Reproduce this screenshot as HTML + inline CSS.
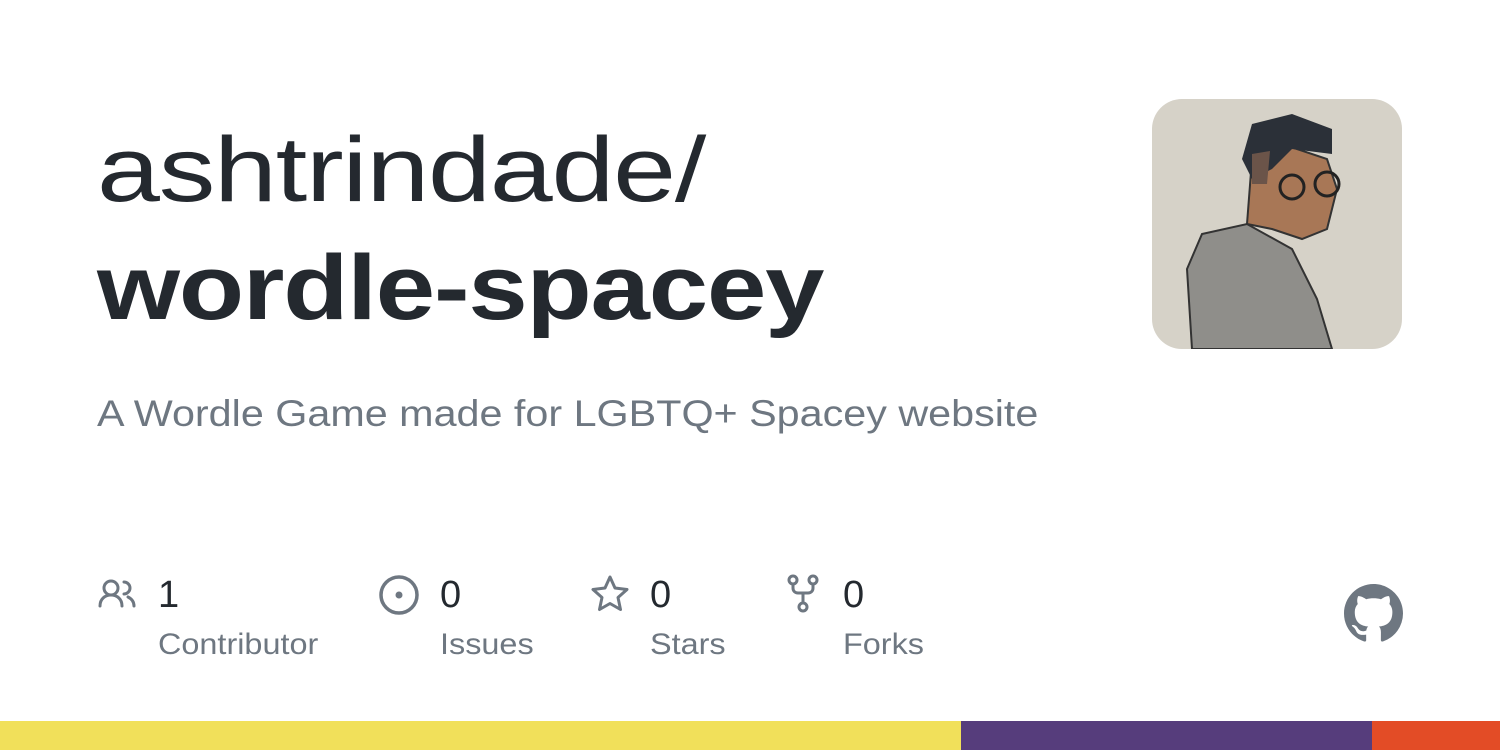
<!DOCTYPE html>
<html><head><style>
body{margin:0;width:1500px;height:750px;background:#fff;position:relative;overflow:hidden;font-family:"Liberation Sans",sans-serif;color:#24292f}
.t{position:absolute;left:97px;white-space:nowrap;transform-origin:left top}
.n{position:absolute;top:574px;font-size:38px;color:#24292f}
.l{position:absolute;top:628px;font-size:30px;color:#6e7781;transform:scaleX(1.08);transform-origin:left top}
svg.i{position:absolute}
</style></head><body>
<div class="t" style="top:118px;font-size:92px;letter-spacing:-1px;transform:scaleX(1.23)">ashtrindade/</div>
<div class="t" style="top:236px;font-size:92px;font-weight:bold;letter-spacing:-1px;transform:scaleX(1.16)">wordle-spacey</div>
<div class="t" style="top:393px;font-size:37px;color:#6e7781;transform:scaleX(1.116)">A Wordle Game made for LGBTQ+ Spacey website</div>

<svg width="250" height="250" style="position:absolute;left:1152px;top:99px" viewBox="0 0 250 250">
<defs><clipPath id="c"><rect width="250" height="250" rx="30"/></clipPath></defs>
<g clip-path="url(#c)">
<rect width="250" height="250" fill="#d6d2c8"/>
<path d="M40 250 L35 170 L50 135 L95 125 L140 150 L165 200 L180 250Z" fill="#8f8e8a" stroke="#333" stroke-width="2"/>
<path d="M95 125 L100 60 L130 45 L175 60 L185 90 L175 130 L150 140 L120 130Z" fill="#a87756" stroke="#333" stroke-width="2"/>
<path d="M90 60 L100 25 L140 15 L180 30 L180 55 L140 50 L120 70 L100 80Z" fill="#2b3038"/>
<path d="M100 55 L118 52 L115 85 L100 85Z" fill="#6b5449"/>
<circle cx="140" cy="88" r="12" fill="none" stroke="#222" stroke-width="3"/>
<circle cx="175" cy="85" r="12" fill="none" stroke="#222" stroke-width="3"/>
</g></svg>

<svg class="i" style="left:98px;top:578px" width="40" height="32" viewBox="0 0 40 32" fill="none" stroke="#6e7781" stroke-width="3" stroke-linecap="round"><circle cx="13" cy="10" r="7"/><path d="M2 28c0-7 5-11 11-11s11 4 11 11"/><path d="M26 4a6 6 0 010 12M30 19c4 2 6 5 6 9"/></svg>
<div class="n" style="left:158px">1</div><div class="l" style="left:158px">Contributor</div>

<svg class="i" style="left:378px;top:574px" width="42" height="42" viewBox="0 0 42 42"><circle cx="21" cy="21" r="18" fill="none" stroke="#6e7781" stroke-width="3.5"/><circle cx="21" cy="21" r="3.5" fill="#6e7781"/></svg>
<div class="n" style="left:440px">0</div><div class="l" style="left:440px">Issues</div>

<svg class="i" style="left:590px;top:574px" width="40" height="38" viewBox="0 0 40 38"><path d="M20 3l5 11 12 1.5-9 8 2.5 12L20 29.5 9.5 35.5 12 23.5l-9-8L15 14z" fill="none" stroke="#6e7781" stroke-width="3" stroke-linejoin="round"/></svg>
<div class="n" style="left:650px">0</div><div class="l" style="left:650px">Stars</div>

<svg class="i" style="left:786px;top:574px" width="34" height="40" viewBox="0 0 34 40" fill="none" stroke="#6e7781" stroke-width="3"><circle cx="7" cy="6" r="4"/><circle cx="27" cy="6" r="4"/><circle cx="17" cy="33" r="4"/><path d="M7 10v4c0 3 2 5 5 5h10c3 0 5-2 5-5v-4M17 19v10"/></svg>
<div class="n" style="left:843px">0</div><div class="l" style="left:843px">Forks</div>

<svg class="i" style="left:1344px;top:584px" width="59" height="59" viewBox="0 0 16 16"><path fill="#6e7781" d="M8 0C3.580 0 0 3.58 0 8c0 3.54 2.29 6.53 5.47 7.590.4.07.55-.17.55-.38 0-.19-.01-.82-.01-1.49-2.010.37-2.53-.49-2.690-.94-.09-.23-.48-.94-.82-1.13-.28-.15-.68-.52-.01-.53.63-.01 1.080.58 1.230.82.72 1.21 1.870.87 2.330.66.07-.52.28-.87.51-1.07-1.78-.2-3.64-.89-3.64-3.95 0-.87.31-1.59.82-2.15-.08-.2-.36-1.020.08-2.12 0 0 .67-.21 2.200.82.64-.18 1.32-.27 2-.27.68 0 1.360.09 2 .27 1.53-1.04 2.2-.82 2.2-.82.44 1.100.16 1.920.08 2.12.51.56.82 1.270.82 2.15 0 3.07-1.87 3.75-3.65 3.95.29.25.54.73.54 1.48 0 1.07-.01 1.93-.01 2.2 0 .21.15.46.55.38A8.013 8.013 0 0016 8c0-4.42-3.58-8-8-8z"/></svg>

<div style="position:absolute;top:721px;left:0;width:961px;height:29px;background:#f1e05a"></div>
<div style="position:absolute;top:721px;left:961px;width:411px;height:29px;background:#563d7c"></div>
<div style="position:absolute;top:721px;left:1372px;width:128px;height:29px;background:#e34c26"></div>
</body></html>
